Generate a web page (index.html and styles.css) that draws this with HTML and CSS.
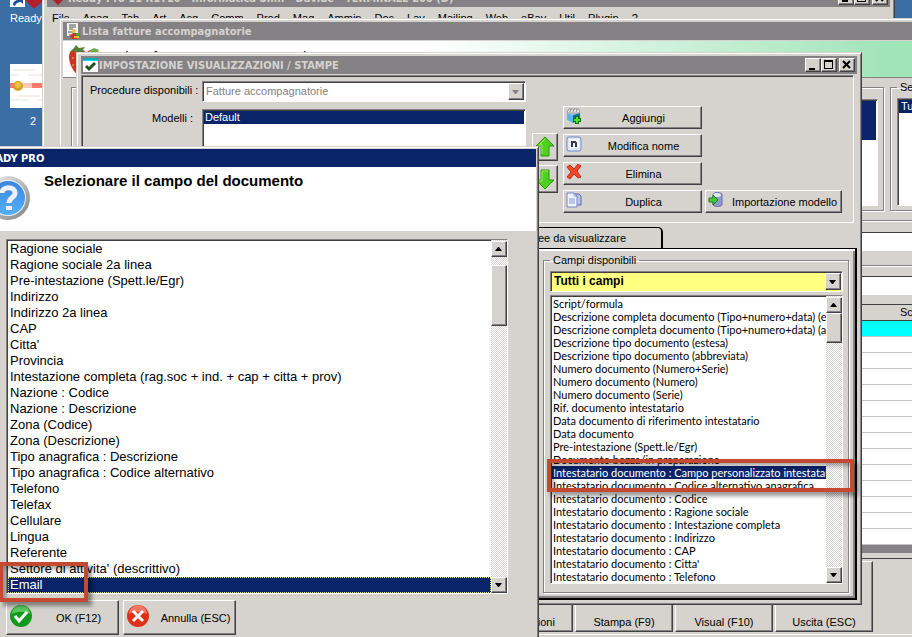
FILE: index.html
```html
<!DOCTYPE html>
<html lang="it">
<head>
    <meta charset="UTF-8">
    <meta name="viewport" content="width=device-width, initial-scale=1.0">
    <title>Ready Pro - Impostazione visualizzazioni / stampe</title>
    <link rel="stylesheet" href="styles.css">
</head>
<body>
    <!-- desktop icons -->
    <div class="desktop-icons">
        <svg class="shortcut" width="33" height="8" viewBox="0 0 33 8">
            <path d="M0 0h15v7H0z" fill="#fff"/>
            <path d="M3 5c0-3 2-5 6-5h4v4l-2-2c-3 0-5 1-6 4z" fill="#1c4c9c"/>
            <path d="M15 0h18v1l-8 7h-2z" fill="#b02028"/>
        </svg>
        <span class="icon-label">ReadyPro</span>
        <svg class="thumb" width="48" height="44" viewBox="0 0 48 44">
            <path d="M0 0h48v44H0z" fill="#fff"/>
            <path d="M0 19h48v5H0z" fill="#ff7a6a"/>
            <path d="M12 19h10v5H12z" fill="#ffc8b8"/>
            <circle cx="8" cy="22" r="5" fill="#d8a020"/>
            <circle cx="8" cy="21" r="3" fill="#ecc040"/>
            <path d="M3 6h22M18 11h26M8 32h22" stroke="#faeee8" stroke-width="2"/>
            <path d="M0 11h8M0 36h18M28 36h12" stroke="#f0f4ec" stroke-width="2"/>
        </svg>
        <span class="icon-label icon-two">2</span>
    </div>

    <!-- main application window -->
    <div class="window app-window">
        <div class="title-bar">
            <svg width="18" height="16" viewBox="0 0 18 16"><path d="M9 15L2 8V3l4-2 3 3 3-3 4 2v5z" fill="#b02028"/></svg>
            <span class="title-text">Ready Pro 11 R1T10 - Informatica S.r.l. - Davide - TERMINALE 200 (D)</span>
            <span class="title-buttons">
                <button aria-label="Riduci"><svg width="10" height="10"><path d="M1 7h6v2H1z"/></svg></button>
                <button aria-label="Ingrandisci"><svg width="10" height="10"><path d="M0 0h9v9H0zM1 2v6h7V2z" fill-rule="evenodd"/></svg></button>
                <button class="close" aria-label="Chiudi"><svg width="10" height="10"><path d="M1 1l7 7M8 1L1 8" stroke="#000" stroke-width="2"/></svg></button>
            </span>
        </div>
        <nav class="menu">
            <a href="#">File</a><a href="#">Anag</a><a href="#">Tab</a><a href="#">Art</a><a href="#">Acq</a><a href="#">Comm</a><a href="#">Prod</a><a href="#">Mag</a><a href="#">Ammin</a><a href="#">Doc</a><a href="#">Lav</a><a href="#">Mailing</a><a href="#">Web</a><a href="#">eBay</a><a href="#">Util</a><a href="#">Plugin</a><a href="#">?</a>
        </nav>
    </div>

    <!-- invoice list window -->
    <div class="window list-window">
        <div class="title-bar">
            <svg width="16" height="16" viewBox="0 0 16 16">
                <path d="M2 0h11v13H2z" fill="#f4f4f0"/>
                <path d="M4 2h7M4 4h7M4 6h4M3 9h5M4 12h4" stroke="#555"/>
                <circle cx="9" cy="8" r="2" fill="#e8c048"/>
                <path d="M5 13l3-3h3l1 6H7z" fill="#d83020"/>
                <path d="M11 10h4v4h-4z" fill="#48a040"/>
                <path d="M9 13h5v2H9z" fill="#f0c020"/>
            </svg>
            <span class="title-text">Lista fatture accompagnatorie</span>
        </div>
        <div class="banner">
            <svg width="36" height="36" viewBox="0 0 36 36">
                <path d="M3 9c4-5 14-4 17 2 2 6-3 15-9 21C4 27 0 15 3 9z" fill="#cf3526"/>
                <path d="M20 9c4-4 12-2 14 3 0 7-5 12-9 16-5-5-8-13-5-19z" fill="#e0543c"/>
                <path d="M3 9l4-4 2-3 3 3 6-1-3 4 3 3-6-2-4 3v-4z" fill="#4f8438"/>
                <path d="M22 8l5-3 5 2-2 3-4-1-3 2z" fill="#76a848"/>
                <path d="M6 14v2M10 17v2M6 21v2M14 15v2" stroke="#f4b070"/>
            </svg>
            <span class="banner-text">Lista fatture accompagnatorie</span>
        </div>
        <div class="filters">
            <div class="group group-wide"></div>
            <div class="group group-middle"><div class="sunken"><div class="selected-block"></div></div></div>
            <fieldset class="group group-series">
                <legend>Serie</legend>
                <div class="sunken"><div class="row-selected">Tutte</div></div>
            </fieldset>
        </div>
        <div class="field-row"><input type="text" aria-label="Ricerca"></div>
        <div class="field-row second"><input type="text" aria-label="Filtro"></div>
        <table class="invoices">
            <thead><tr><th></th><th class="col-last">Scadenza</th></tr></thead>
            <tbody>
                <tr class="current"><td></td><td></td></tr>
                <tr><td></td><td></td></tr>
                <tr><td></td><td></td></tr>
                <tr><td></td><td></td></tr>
                <tr><td></td><td></td></tr>
                <tr><td></td><td></td></tr>
                <tr><td></td><td></td></tr>
                <tr><td></td><td></td></tr>
                <tr><td></td><td></td></tr>
                <tr><td></td><td></td></tr>
                <tr><td></td><td></td></tr>
                <tr><td></td><td></td></tr>
                <tr><td></td><td></td></tr>
                <tr><td></td><td></td></tr>
            </tbody>
        </table>
        <div class="list-actions">
            <button>Impostazioni</button>
            <button>Stampa (F9)</button>
            <button>Visual (F10)</button>
            <button>Uscita (ESC)</button>
        </div>
    </div>

    <!-- print settings dialog -->
    <div class="window settings-window">
        <div class="title-bar">
            <svg width="15" height="14" viewBox="0 0 15 14">
                <path d="M0 0h15v14H0z" fill="#fff"/>
                <path d="M0 0h15v3H0z" fill="#00dce8"/>
                <path d="M0 1h15" stroke="#087c88"/>
                <path d="M3 8l3 3 6-6" fill="none" stroke="#205020" stroke-width="3"/>
            </svg>
            <span class="title-text">IMPOSTAZIONE VISUALIZZAZIONI / STAMPE</span>
            <span class="title-buttons">
                <button aria-label="Riduci"><svg width="10" height="10"><path d="M1 8h6v2H1z"/></svg></button>
                <button aria-label="Ingrandisci"><svg width="10" height="10"><path d="M0 0h9v9H0zM1 2v6h7V2z" fill-rule="evenodd"/></svg></button>
                <button class="close" aria-label="Chiudi"><svg width="10" height="10"><path d="M1 1l7 7M8 1L1 8" stroke="#000" stroke-width="2"/></svg></button>
            </span>
        </div>
        <div class="settings-top">
            <div class="settings-form">
                <label for="procedure">Procedure disponibili :</label>
                <div class="combo disabled">
                    <select id="procedure" disabled><option>Fatture accompagnatorie</option></select>
                    <span class="combo-arrow"><svg width="8" height="4"><path d="M0 0h7L4 4H3z" fill="#848284"/></svg></span>
                </div>
                <label for="modelli">Modelli :</label>
                <select id="modelli" class="listbox models" size="5"><option selected>Default</option></select>
            </div>
            <div class="arrows">
                <button aria-label="Sposta su"><svg width="20" height="22" viewBox="0 0 20 22"><path d="M10 1l9 9h-5v10H6V10H1z" fill="#4fd01c" stroke="#2c9410"/><path d="M10 3L4 9h3v9" fill="none" stroke="#9af068"/></svg></button>
                <button aria-label="Sposta giu"><svg width="20" height="22" viewBox="0 0 20 22"><path d="M10 21l9-9h-5V2H6v10H1z" fill="#4fd01c" stroke="#2c9410"/><path d="M13 3H7v10H4" fill="none" stroke="#9af068"/></svg></button>
            </div>
            <div class="model-actions">
                <button>
                    <svg width="16" height="16" viewBox="0 0 16 16"><path d="M1 4l2-3h10l1 4H2z" fill="#e8e8e8" stroke="#999"/><path d="M4 4l1-3M7 4l1-3M10 4l1-3" stroke="#888"/><path d="M1 5l6 2v8l-6-3z" fill="#58b8f0"/><path d="M7 7l7-2v7l-7 3z" fill="#1868b8"/><path d="M11 8v8M7 12h8" stroke="#0c7010" stroke-width="4"/><path d="M11 9v6M8 12h6" stroke="#50e030" stroke-width="2"/></svg>
                    <span>Aggiungi</span>
                </button>
                <button>
                    <svg width="16" height="16" viewBox="0 0 16 16"><rect x="1" y="1" width="14" height="14" rx="2" fill="#dce6fa" stroke="#6c8cd0"/><path d="M3 3h10v9H3z" fill="#f4f8ff"/><path d="M6 11V5M6 6h3l1 1v4" fill="none" stroke="#303848" stroke-width="2"/></svg>
                    <span>Modifica nome</span>
                </button>
                <button>
                    <svg width="16" height="16" viewBox="0 0 16 16"><path d="M1 3l3-2 4 4 4-5 3 2-4 5 4 6-3 1-4-4-4 5-3-2 4-5z" fill="#f04828" stroke="#c02c18"/></svg>
                    <span>Elimina</span>
                </button>
                <button>
                    <svg width="16" height="16" viewBox="0 0 16 16"><path d="M6 2h7l2 2v9H6z" fill="#b8c4e8" stroke="#5868a8"/><path d="M1 1h7l3 3v11H1z" fill="#eef2ff" stroke="#7888c4"/><path d="M8 1v3h3M3 7h6M3 9h6M3 11h6" fill="none" stroke="#8898d0"/></svg>
                    <span>Duplica</span>
                </button>
                <button>
                    <svg width="16" height="16" viewBox="0 0 16 16"><path d="M5 2c2-2 7-2 9 0v11c-2 2-7 2-9 0z" fill="#9098d0" stroke="#6870a8"/><ellipse cx="9" cy="3" rx="4" ry="2" fill="#e0e4f4"/><path d="M1 6h4V3l5 5-5 5v-3H1z" fill="#48c838" stroke="#188018"/></svg>
                    <span>Importazione modello</span>
                </button>
            </div>
        </div>
        <div class="tabs"><button class="tab">Linee da visualizzare</button></div>
        <div class="tab-panel">
            <fieldset class="group fields-group">
                <legend>Campi disponibili</legend>
                <div class="combo yellow">
                    <select aria-label="Categoria campi"><option>Tutti i campi</option></select>
                    <span class="combo-arrow"><svg width="8" height="4"><path d="M0 0h7L4 4H3z"/></svg></span>
                </div>
                <div class="list-frame">
                    <select class="listbox fields" size="22" aria-label="Campi disponibili">
                        <option>Script/formula</option>
                        <option>Descrizione completa documento (Tipo+numero+data) (estesa)</option>
                        <option>Descrizione completa documento (Tipo+numero+data) (abbreviata)</option>
                        <option>Descrizione tipo documento (estesa)</option>
                        <option>Descrizione tipo documento (abbreviata)</option>
                        <option>Numero documento (Numero+Serie)</option>
                        <option>Numero documento (Numero)</option>
                        <option>Numero documento (Serie)</option>
                        <option>Rif. documento intestatario</option>
                        <option>Data documento di riferimento intestatario</option>
                        <option>Data documento</option>
                        <option>Pre-intestazione (Spett.le/Egr)</option>
                        <option>Documento bozza/in preparazione</option>
                        <option selected>Intestatario documento : Campo personalizzato intestatario</option>
                        <option>Intestatario documento : Codice alternativo anagrafica</option>
                        <option>Intestatario documento : Codice</option>
                        <option>Intestatario documento : Ragione sociale</option>
                        <option>Intestatario documento : Intestazione completa</option>
                        <option>Intestatario documento : Indirizzo</option>
                        <option>Intestatario documento : CAP</option>
                        <option>Intestatario documento : Citta'</option>
                        <option>Intestatario documento : Telefono</option>
                    </select>
                    <div class="scrollbar">
                        <button aria-label="Su"><svg width="8" height="4"><path d="M3 0h1l3 4H0z"/></svg></button>
                        <div class="thumb-short"></div>
                        <button class="down" aria-label="Giu"><svg width="8" height="4"><path d="M0 0h7L4 4H3z"/></svg></button>
                    </div>
                </div>
            </fieldset>
        </div>
    </div>

    <!-- field picker dialog -->
    <div class="window picker-window">
        <div class="title-bar active"><span class="title-text">READY PRO</span></div>
        <div class="picker-header">
            <svg width="46" height="46" viewBox="0 0 46 46">
                <defs>
                    <linearGradient id="ring" x1="0" y1="0" x2="1" y2="1"><stop offset="0" stop-color="#f4f4f4"/><stop offset="1" stop-color="#808080"/></linearGradient>
                    <linearGradient id="ball" x1="0" y1="0" x2="0" y2="1"><stop offset="0" stop-color="#3c84dc"/><stop offset="1" stop-color="#54b0f8"/></linearGradient>
                </defs>
                <circle cx="23" cy="23" r="22" fill="url(#ring)"/>
                <circle cx="23" cy="23" r="18" fill="#e8f0fa"/>
                <circle cx="23" cy="23" r="17" fill="url(#ball)"/>
                <path d="M17 18c0-7 13-7 13 0 0 5-6 4-6 10" fill="none" stroke="#f0f0fc" stroke-width="5"/>
                <path d="M21 31h6v4h-6z" fill="#f0f0fc"/>
            </svg>
            <h1>Selezionare il campo del documento</h1>
        </div>
        <div class="picker-body">
            <div class="list-frame">
                <select class="listbox large" size="22" aria-label="Campo del documento">
                    <option>Ragione sociale</option>
                    <option>Ragione sociale 2a linea</option>
                    <option>Pre-intestazione (Spett.le/Egr)</option>
                    <option>Indirizzo</option>
                    <option>Indirizzo 2a linea</option>
                    <option>CAP</option>
                    <option>Citta'</option>
                    <option>Provincia</option>
                    <option>Intestazione completa (rag.soc + ind. + cap + citta + prov)</option>
                    <option>Nazione : Codice</option>
                    <option>Nazione : Descrizione</option>
                    <option>Zona (Codice)</option>
                    <option>Zona (Descrizione)</option>
                    <option>Tipo anagrafica : Descrizione</option>
                    <option>Tipo anagrafica : Codice alternativo</option>
                    <option>Telefono</option>
                    <option>Telefax</option>
                    <option>Cellulare</option>
                    <option>Lingua</option>
                    <option>Referente</option>
                    <option>Settore di attivita' (descrittivo)</option>
                    <option selected>Email</option>
                </select>
                <div class="scrollbar">
                    <button aria-label="Su"><svg width="8" height="4"><path d="M3 0h1l3 4H0z"/></svg></button>
                    <div class="thumb-long"></div>
                    <button class="down" aria-label="Giu"><svg width="8" height="4"><path d="M0 0h7L4 4H3z"/></svg></button>
                </div>
            </div>
            <div class="picker-actions">
                <button>
                    <svg width="24" height="24" viewBox="0 0 24 24"><circle cx="12" cy="12" r="11" fill="#129a1c"/><path d="M3 10a9 9 0 0 1 18 0c-5-3-13-3-18 0z" fill="#5cc860"/><path d="M6 12l4 5 8-9" fill="none" stroke="#fff" stroke-width="3"/></svg>
                    <span>OK (F12)</span>
                </button>
                <button>
                    <svg width="24" height="24" viewBox="0 0 24 24"><circle cx="12" cy="12" r="11" fill="#e03018"/><path d="M3 10a9 9 0 0 1 18 0c-5-3-13-3-18 0z" fill="#f47860"/><path d="M7 7l10 10M17 7L7 17" stroke="#fff" stroke-width="3"/></svg>
                    <span>Annulla (ESC)</span>
                </button>
            </div>
        </div>
    </div>

    <div class="highlight highlight-field"></div>
    <div class="highlight highlight-email"></div>
</body>
</html>
```

FILE: styles.css
```css
* {
    box-sizing: border-box;
}
body {
    margin: 0;
    height: 100vh;
    overflow: hidden;
    position: relative;
    background: #3a6ea5;
    color: #000;
    font-family: "Liberation Sans", Arial, sans-serif;
    font-size: 11px;
    line-height: 13px;
}
button, select, input {
    font: inherit;
    color: inherit;
    margin: 0;
    padding: 0;
    border: 0;
    border-radius: 0;
    background: #d6d3ce;
}
svg {
    display: block;
    flex: none;
}

/* desktop */
.desktop-icons {
    display: flex;
    flex-direction: column;
    align-items: flex-start;
    padding-left: 10px;
    color: #fff;
}
.icon-label {
    margin-top: 4px;
}
.thumb {
    margin-top: 39px;
}
.icon-two {
    margin: 7px 0 0 20px;
}

/* windows */
.window {
    position: absolute;
    display: flex;
    flex-direction: column;
    padding: 4px;
    background: #d6d3ce;
    border: 1px solid;
    border-color: #d6d3ce #424142 #424142 #d6d3ce;
    box-shadow: inset 1px 1px #fff, inset -1px -1px #848284;
}
.title-bar {
    display: flex;
    flex: none;
    align-items: center;
    height: 18px;
    padding: 0 2px;
    gap: 1px;
    background: #848284;
    color: #d6d3ce;
    font-family: "DejaVu Sans Condensed", "DejaVu Sans", sans-serif;
    font-weight: bold;
    white-space: nowrap;
}
.title-bar.active {
    background: #0a246a;
    color: #fff;
}
.title-buttons {
    display: flex;
    margin-left: auto;
}
.title-buttons button, .scrollbar button, .combo-arrow {
    display: flex;
    align-items: center;
    justify-content: center;
    width: 16px;
    height: 16px;
    border: 1px solid;
    border-color: #fff #424142 #424142 #fff;
    box-shadow: inset -1px -1px #848284;
    background: #d6d3ce;
}
.title-buttons button {
    height: 14px;
}
.title-buttons .close {
    margin-left: 2px;
}
.app-window {
    left: 42px;
    right: 17px;
    top: -16px;
    bottom: -20px;
}
.menu {
    display: flex;
    gap: 13px;
    padding: 5px;
}
.menu a {
    color: #000;
    text-decoration: none;
}

/* invoice list */
.list-window {
    left: 59px;
    right: -60px;
    top: 18px;
    bottom: -10px;
    padding: 3px;
}
.banner {
    display: flex;
    flex: none;
    height: 37px;
    margin-top: 1px;
    padding: 2px 4px;
    gap: 14px;
    background: linear-gradient(to right, #fff 40%, #a0e4b8 92%);
    border-bottom: 1px solid #848284;
}
.banner-text {
    margin-top: 7px;
    font-size: 15px;
}
.group {
    min-width: 0;
    margin: 0;
    border: 1px solid #848284;
    box-shadow: inset 1px 1px #fff, 1px 1px #fff;
}
legend {
    padding: 0 3px;
}
.filters {
    display: flex;
    flex: none;
    height: 142px;
    gap: 6px;
    padding: 9px 0;
}
.group-wide {
    width: 280px;
    margin-left: 8px;
}
.group-middle {
    flex: 1;
    padding: 11px 5px 4px;
}
.group-series {
    width: 78px;
    margin-top: -6px;
    padding: 4px 0 4px 6px;
}
.sunken {
    height: 100%;
    padding: 1px;
    background: #fff;
    border: 1px solid;
    border-color: #848284 #fff #fff #848284;
    box-shadow: inset 1px 1px #424142;
}
.selected-block {
    height: 39px;
    background: #0a246a;
}
.row-selected {
    padding-left: 2px;
    background: #0a246a;
    color: #fff;
}
.field-row {
    flex: none;
    height: 34px;
    padding-top: 11px;
    border-top: 1px solid #848284;
    box-shadow: inset 0 1px #fff;
}
.field-row.second {
    height: 35px;
    margin-top: 11px;
    padding-top: 10px;
}
.field-row input {
    width: 100%;
    height: 20px;
    background: #fff;
    border: 1px solid;
    border-color: #424142 #fff #d6d3ce;
}
.invoices {
    flex: none;
    width: 100%;
    margin-top: 4px;
    border-spacing: 0;
    border-top: 1px solid #424142;
    border-bottom: 8px solid #848284;
    background: #fff;
}
.invoices th {
    height: 16px;
    padding: 0;
    background: #d6d3ce;
    border-bottom: 1px solid #424142;
    font-weight: normal;
    text-align: left;
}
.invoices .col-last {
    width: 68px;
}
.invoices td {
    height: 16px;
    padding: 0;
    border-bottom: 1px solid #c6c3c6;
}
.invoices .current {
    background: #00ffff;
}
.list-actions {
    display: flex;
    flex: none;
    gap: 2px;
    height: 77px;
    margin-top: 5px;
    padding: 2px 95px 2px 0;
    justify-content: flex-end;
    border-top: 1px solid #424142;
    border-bottom: 1px solid #fff;
}
.list-actions button, .model-actions button, .picker-actions button, .arrows button {
    border: 1px solid;
    border-color: #fff #424142 #424142 #fff;
    box-shadow: inset -1px -1px #848284;
}
.list-actions button {
    width: 98px;
    padding-top: 52px;
}

/* settings dialog */
.settings-window {
    left: 76px;
    right: 50px;
    top: 52px;
    padding: 3px 4px 4px;
}
.settings-top {
    display: flex;
    height: 148px;
    margin: 1px 3px 0 0;
    padding: 5px 11px 0 8px;
    border: 1px solid;
    border-color: #848284 #fff #fff #848284;
    box-shadow: inset 1px 1px #424142;
}
.settings-form {
    display: grid;
    grid-template-columns: 103px 1fr;
    grid-template-rows: 21px 110px;
    gap: 7px 9px;
    flex: 1;
}
.settings-form label {
    padding-top: 3px;
    text-align: right;
    white-space: nowrap;
}
.combo {
    display: flex;
    height: 21px;
    padding: 1px;
    background: #fff;
    border: 1px solid;
    border-color: #848284 #fff #fff #848284;
    box-shadow: inset 1px 1px #424142;
}
.combo select {
    flex: 1;
    min-width: 0;
    padding-left: 2px;
    appearance: none;
    background: transparent;
    opacity: 1;
}
.combo.disabled select {
    color: #848284;
}
.combo.yellow {
    background: #ffff80;
    font-size: 12px;
    font-weight: bold;
}
.combo-arrow {
    height: 17px;
}
.listbox {
    display: block;
    flex: 1;
    min-width: 0;
    padding: 1px;
    overflow: hidden;
    scrollbar-width: none;
    background: #fff;
}
.listbox option {
    height: 13px;
    min-height: 13px;
    padding: 0 0 0 1px;
    line-height: 13px;
    overflow: hidden;
}
.listbox option:checked {
    background: #0a246a linear-gradient(#0a246a, #0a246a);
    color: #fff;
    -webkit-text-fill-color: #fff;
}
.listbox.fields {
    font-family: Lato, "Liberation Sans", sans-serif;
}
.models {
    border: 1px solid;
    border-color: #848284 #fff #fff #848284;
    box-shadow: inset 1px 1px #424142;
}
.arrows {
    display: flex;
    flex-direction: column;
    gap: 4px;
    margin: 52px 5px 0 6px;
}
.arrows button {
    width: 26px;
    height: 28px;
    padding-left: 2px;
}
.model-actions {
    display: grid;
    grid-template-columns: 139px 137px;
    grid-auto-rows: 23px;
    gap: 5px 3px;
    padding-top: 25px;
}
.model-actions button {
    display: flex;
    grid-column: 1;
    padding: 1px 2px;
}
.model-actions button:last-child {
    grid-column: 2;
    grid-row: 4;
}
.model-actions span {
    flex: 1;
    margin-top: 4px;
    padding-left: 6px;
    text-align: center;
    white-space: nowrap;
}
.tabs {
    display: flex;
    margin-top: 4px;
}
.tab {
    width: 582px;
    height: 21px;
    padding-right: 35px;
    text-align: right;
    border-top: 1px solid #000;
    border-right: 2px solid #000;
    border-top-right-radius: 5px;
}
.tab-panel {
    display: flex;
    justify-content: flex-end;
    padding: 5px 6px 5px 0;
    border: 1px solid #000;
    border-right-width: 2px;
    border-bottom-width: 2px;
    box-shadow: inset 0 2px #fff, inset -2px -2px #848284;
}
.fields-group {
    width: 306px;
    padding: 4px 5px 8px 6px;
}
.list-frame {
    display: flex;
    border: 1px solid;
    border-color: #848284 #fff #fff #848284;
    background: #fff;
}
.fields-group .list-frame {
    margin-top: 3px;
}
.list-frame .listbox {
    border-top: 1px solid #424142;
    border-left: 1px solid #424142;
    padding: 0;
}
.scrollbar {
    display: flex;
    flex: none;
    flex-direction: column;
    width: 16px;
    padding-top: 1px;
    background: repeating-conic-gradient(#fff 0 25%, #d6d3ce 0 50%) 0 0 / 2px 2px;
}
.scrollbar .down {
    margin-top: auto;
}
.thumb-short, .thumb-long {
    height: 30px;
    background: #d6d3ce;
    border: 1px solid;
    border-color: #fff #424142 #424142 #fff;
    box-shadow: inset -1px -1px #848284;
}
.thumb-long {
    height: 61px;
    margin-top: 8px;
}

/* field picker */
.picker-window {
    left: -24px;
    width: 563px;
    top: 146px;
    padding: 2px 2px 4px;
}
.picker-header {
    display: flex;
    height: 64px;
    padding: 8px 6px;
    gap: 13px;
    background: #fff;
}
.picker-header h1 {
    margin: 0;
    font-size: 15px;
    line-height: 12px;
}
.picker-body {
    padding: 8px 28px 0 27px;
}
.listbox.large {
    font-size: 13px;
}
.listbox.large option {
    height: 16px;
    min-height: 16px;
    line-height: 16px;
    padding-left: 2px;
}
.listbox.large option:checked {
    outline: 1px dotted #f0e08c;
    outline-offset: -1px;
}
.picker-actions {
    display: flex;
    gap: 4px;
    margin-top: 6px;
}
.picker-actions button {
    display: flex;
    width: 113px;
    height: 35px;
    padding: 3px 2px;
}
.picker-actions span {
    flex: 1;
    margin-top: 8px;
    padding-left: 8px;
    text-align: center;
}

/* red marks */
.highlight {
    position: absolute;
    border: 4px solid #c34a30;
    box-shadow: 4px 4px 4px rgba(0, 0, 0, .4), inset 3px 3px 4px rgba(0, 0, 0, .35);
}
.highlight-field {
    left: 547px;
    top: 459px;
    width: 307px;
    height: 33px;
}
.highlight-email {
    left: -1px;
    top: 562px;
    width: 89px;
    height: 40px;
}
```
